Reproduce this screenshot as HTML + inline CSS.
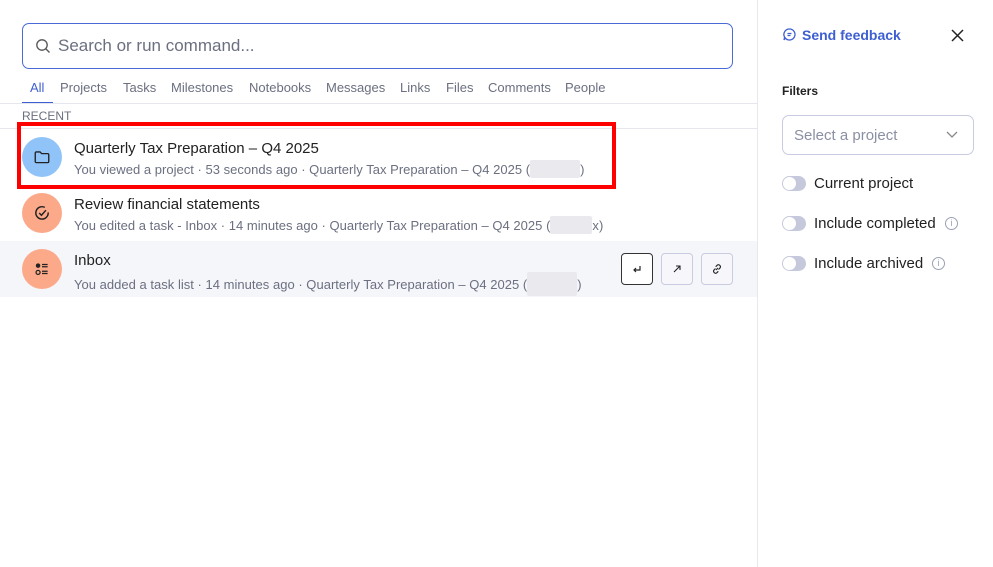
<!DOCTYPE html>
<html><head><meta charset="utf-8"><style>
*{box-sizing:border-box;margin:0;padding:0}
body{width:993px;height:567px;background:#fff;font-family:"Liberation Sans",sans-serif;position:relative;overflow:hidden;color:#222}
.abs{position:absolute}
.search{left:22px;top:23px;width:711px;height:46px;border:1px solid #4a6bd6;border-radius:7px}
.search span{position:absolute;left:35px;top:12px;font-size:17px;color:#6b6f80}
.tabs{top:80px;left:30px;font-size:13px;color:#6b6f80}
.tabs span{position:absolute;white-space:nowrap}
.line{left:0;width:757px;height:1px;background:#e6e7ee}
.sb{left:757px;top:0;width:1px;height:567px;background:#e8e9ef}
.av{left:22px;width:40px;height:40px;border-radius:50%}
.av svg{position:absolute;left:11px;top:11px}
.t{left:74px;font-size:15px;color:#222;white-space:nowrap}
.s{left:74px;font-size:13px;letter-spacing:0.02px;color:#6b6f80;white-space:nowrap}
.blur{background:#e9e9ee;height:18px;border-radius:2px}
.btn{width:32px;height:32px;border:1px solid #c9cbe0;border-radius:4px;background:#f7f7fb;display:flex;align-items:center;justify-content:center}
.tog{left:782px;width:24px;height:15px;border-radius:8px;background:#c6c9dc}
.tog::after{content:"";position:absolute;left:1px;top:1px;width:13px;height:13px;border-radius:50%;background:#fff}
.lbl{left:814px;font-size:15px;color:#222;white-space:nowrap}
.info{width:13px;height:13px;border:1px solid #9aa0b4;border-radius:50%;font-size:9px;color:#9aa0b4;text-align:center;line-height:11px}
</style></head><body>
<div class="abs search">
<svg style="position:absolute;left:12px;top:14px" width="16" height="16" viewBox="0 0 16 16"><circle cx="7" cy="7" r="5.2" fill="none" stroke="#555" stroke-width="1.3"/><path d="M11 11l3.5 3.5" stroke="#555" stroke-width="1.3"/></svg>
<span>Search or run command...</span></div>
<div class="abs tabs">
<span style="left:0;color:#3e5fd1">All</span><span style="left:30px">Projects</span><span style="left:93px">Tasks</span><span style="left:141px">Milestones</span><span style="left:219px">Notebooks</span><span style="left:296px">Messages</span><span style="left:370px">Links</span><span style="left:416px">Files</span><span style="left:458px">Comments</span><span style="left:535px">People</span></div>
<div class="abs" style="left:22px;top:102px;width:31px;height:2px;background:#3e5fd1"></div>
<div class="abs line" style="top:103px"></div>
<div class="abs" style="left:22px;top:109px;font-size:12px;color:#6b6f80">RECENT</div>
<div class="abs line" style="top:128px"></div>

<div class="abs av" style="top:137px;background:#90c4f9"><svg width="18" height="18" viewBox="0 0 16 16"><path d="M2 4.5a1 1 0 0 1 1-1h3.2l1.5 1.5H13a1 1 0 0 1 1 1v6a1 1 0 0 1-1 1H3a1 1 0 0 1-1-1z" fill="none" stroke="#222" stroke-width="1.2"/></svg></div>
<div class="abs t" style="top:140px">Quarterly Tax Preparation – Q4 2025</div>
<div class="abs s" style="top:160px">You viewed a project · 53 seconds ago · Quarterly Tax Preparation – Q4 2025 (<span class="blur" style="display:inline-block;width:50px;vertical-align:-4px"></span>)</div>
<div class="abs" style="left:17px;top:122px;width:599px;height:67px;border:4px solid #f00"></div>

<div class="abs av" style="top:193px;background:#fca98a"><svg width="18" height="18" viewBox="0 0 16 16"><path d="M13.5 7.5A5.5 5.5 0 1 1 10.5 3" fill="none" stroke="#222" stroke-width="1.3"/><path d="M5.5 8l2 2 4-4.5" fill="none" stroke="#222" stroke-width="1.3"/></svg></div>
<div class="abs t" style="top:196px">Review financial statements</div>
<div class="abs s" style="top:216px">You edited a task - Inbox · 14 minutes ago · Quarterly Tax Preparation – Q4 2025 (<span class="blur" style="display:inline-block;width:42px;vertical-align:-4px"></span>x)</div>

<div class="abs" style="left:0;top:241px;width:757px;height:56px;background:#f5f6fa"></div>
<div class="abs av" style="top:249px;background:#fca98a"><svg width="18" height="18" viewBox="0 0 16 16"><circle cx="4.5" cy="5" r="2" fill="#222"/><circle cx="4.5" cy="11" r="1.8" fill="none" stroke="#222" stroke-width="1.1"/><path d="M8 4h5M8 6h5M8 10h5M8 12h5" stroke="#222" stroke-width="1.1"/></svg></div>
<div class="abs t" style="top:252px">Inbox</div>
<div class="abs s" style="top:272px">You added a task list · 14 minutes ago · Quarterly Tax Preparation – Q4 2025 (<span class="blur" style="display:inline-block;width:50px;height:24px;vertical-align:-7px"></span>)</div>
<div class="abs btn" style="left:621px;top:253px;border-color:#333;background:#fff"><svg width="14" height="14" viewBox="0 0 14 14"><path d="M10 4v4H4M6 6L4 8l2 2" fill="none" stroke="#222" stroke-width="1.2"/></svg></div>
<div class="abs btn" style="left:661px;top:253px"><svg width="14" height="14" viewBox="0 0 14 14"><path d="M4 10l6-6M6 4h4v4" fill="none" stroke="#222" stroke-width="1.1"/></svg></div>
<div class="abs btn" style="left:701px;top:253px"><svg width="14" height="14" viewBox="0 0 14 14"><path d="M6 8l2-2M5.5 6.5l-1.5 1.5a2 2 0 0 0 2.8 2.8l1.5-1.5M8.5 7.5l1.5-1.5a2 2 0 0 0-2.8-2.8L5.7 4.7" fill="none" stroke="#222" stroke-width="1.1"/></svg></div>

<div class="abs sb"></div>
<svg class="abs" style="left:782px;top:27px" width="15" height="15" viewBox="0 0 15 15"><path d="M7.5 2a5.5 5.5 0 1 1-4.4 8.8L2 13l.6-2.8A5.5 5.5 0 0 1 7.5 2z" fill="none" stroke="#3e5fd1" stroke-width="1.3"/><path d="M5.5 6.5h4M5.5 8.5h3" stroke="#3e5fd1" stroke-width="1.2"/></svg>
<div class="abs" style="left:802px;top:27px;font-size:14px;color:#3e5fd1;font-weight:bold">Send feedback</div>
<svg class="abs" style="left:951px;top:29px" width="13" height="13" viewBox="0 0 13 13"><path d="M1 1l11 11M12 1L1 12" stroke="#222" stroke-width="1.5"/></svg>
<div class="abs" style="left:782px;top:84px;font-size:12px;font-weight:bold;color:#222">Filters</div>
<div class="abs" style="left:782px;top:115px;width:192px;height:40px;border:1px solid #c9cbe0;border-radius:7px"><span style="position:absolute;left:11px;top:11px;font-size:15px;color:#8a8fa3">Select a project</span><svg style="position:absolute;right:15px;top:15px" width="12" height="8" viewBox="0 0 12 8"><path d="M1 1l5 5 5-5" fill="none" stroke="#888" stroke-width="1.3"/></svg></div>
<div class="abs tog" style="top:176px"></div><div class="abs lbl" style="top:175px">Current project</div>
<div class="abs tog" style="top:216px"></div><div class="abs lbl" style="top:215px">Include completed</div><div class="abs info" style="left:945px;top:217px">i</div>
<div class="abs tog" style="top:256px"></div><div class="abs lbl" style="top:255px">Include archived</div><div class="abs info" style="left:932px;top:257px">i</div>
</body></html>
